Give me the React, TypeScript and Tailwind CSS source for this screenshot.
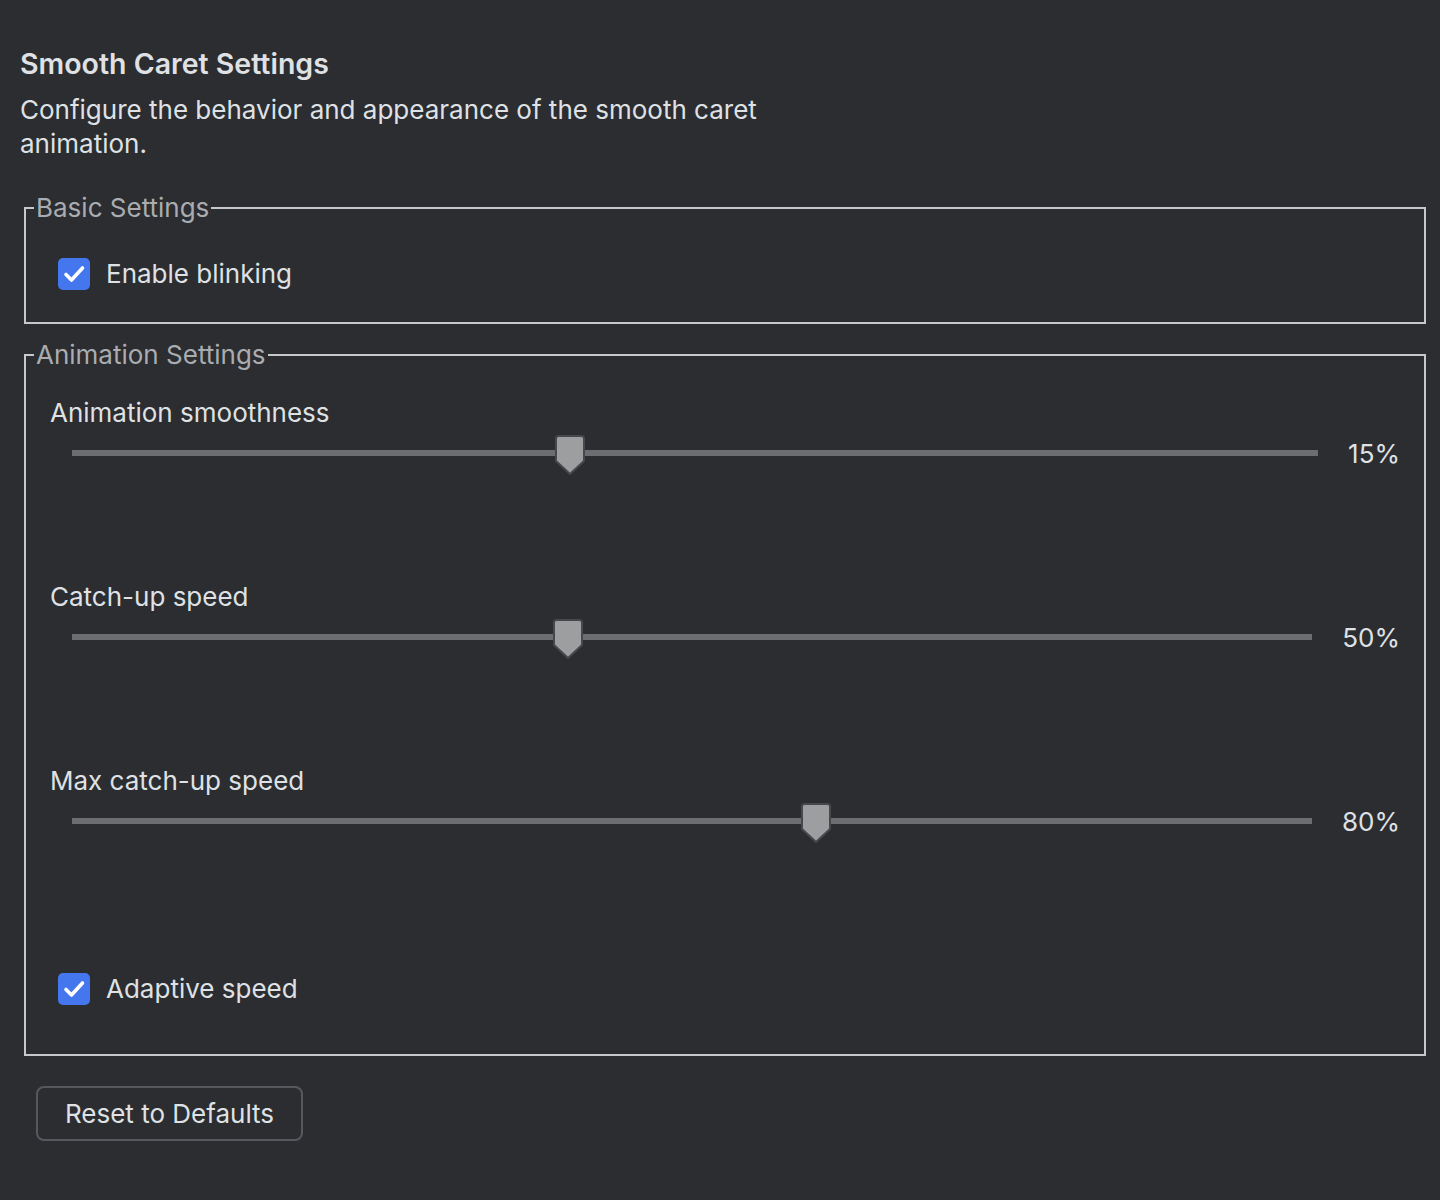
import React from "react";

const font = { fontFamily: "Inter, 'Noto Sans', sans-serif" };

const Checkbox = ({ label }: { label: string }) => (
  <label className="flex items-center gap-[16px] pl-[32px] text-[26px] text-[#dfe1e5]">
    <span className="flex h-[32px] w-[32px] items-center justify-center rounded-[5px] bg-[#4476ee]">
      <svg width="24" height="24" viewBox="0 0 24 24" fill="none">
        <path
          d="M4 12.5l5.5 5.5L20.5 6"
          stroke="white"
          strokeWidth="3.6"
          strokeLinecap="round"
          strokeLinejoin="round"
        />
      </svg>
    </span>
    <span className="leading-[32px]">{label}</span>
  </label>
);

const Thumb = () => (
  <svg width="32" height="42" viewBox="0 0 32 42">
    <path
      d="M4.5 2h23a2.5 2.5 0 0 1 2.5 2.5V27L16 40 2 27V4.5A2.5 2.5 0 0 1 4.5 2z"
      fill="#9c9e9f"
      stroke="#45484d"
      strokeWidth="2"
      strokeLinejoin="round"
    />
  </svg>
);

const SliderRow = ({
  label,
  value,
  pos,
  last,
}: {
  label: string;
  value: string;
  pos: string;
  last?: boolean;
}) => (
  <div className={last ? "mb-[132px]" : "mb-[108px]"}>
    <div className="text-[26px] leading-[32px] text-[#dfe1e5]">{label}</div>
    <div className="mt-[4px] flex h-[40px] items-center pl-[22px]">
      <div className="relative h-[6px] flex-1 bg-[#6b6d70]">
        <div className={`absolute top-1/2 -translate-x-1/2 -translate-y-[19px] ${pos}`}>
          <Thumb />
        </div>
      </div>
      <div className="ml-[30px] min-w-[52px] text-right text-[26px] text-[#dfe1e5]">
        {value}
      </div>
    </div>
  </div>
);

export default function App() {
  return (
    <div
      className="min-h-[1200px] w-full bg-[#2b2d30] pl-[20px] pr-[14px] pt-[45px]"
      style={font}
    >
      <h1 className="text-[28.5px] font-semibold leading-[38px] text-[#dfe1e5]">
        Smooth Caret Settings
      </h1>
      <p className="mt-[10px] max-w-[760px] text-[26px] leading-[34px] text-[#dfe1e5]">
        Configure the behavior and appearance of the smooth caret animation.
      </p>

      <fieldset className="ml-[4px] mt-[31px] border-2 border-[#c6c8cb] pb-[32px] pl-[8px] pr-[24px] pt-[32px]">
        <legend className="px-[2px] text-[26px] leading-[32px] text-[#a9acb1]">
          Basic Settings
        </legend>
        <div className="-ml-[8px] pt-[2px]">
          <Checkbox label="Enable blinking" />
        </div>
      </fieldset>

      <fieldset className="ml-[4px] mt-[15px] border-2 border-[#c6c8cb] pb-[49px] pl-[8px] pr-[24px] pt-[26px]">
        <legend className="px-[2px] text-[26px] leading-[32px] text-[#a9acb1]">
          Animation Settings
        </legend>
        <div className="pl-[16px]">
          <SliderRow label="Animation smoothness" value="15%" pos="left-[40%]" />
          <SliderRow label="Catch-up speed" value="50%" pos="left-[40%]" />
          <SliderRow label="Max catch-up speed" value="80%" pos="left-[60%]" last />
        </div>
        <div className="-ml-[8px]">
          <Checkbox label="Adaptive speed" />
        </div>
      </fieldset>

      <button className="ml-[16px] mt-[30px] flex h-[55px] w-[267px] items-center justify-center rounded-[8px] border-2 border-[#55585d] text-[26px] text-[#dfe1e5]">
        Reset to Defaults
      </button>
    </div>
  );
}
